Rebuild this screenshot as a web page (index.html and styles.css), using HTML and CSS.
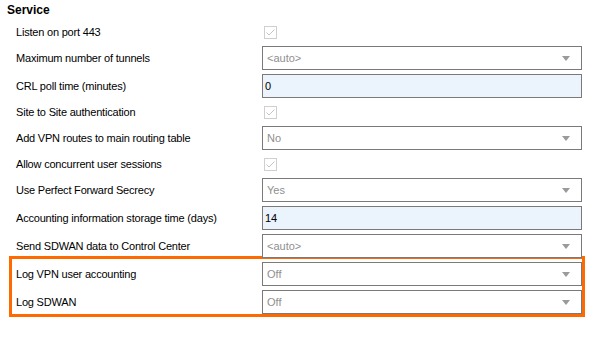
FILE: index.html
```html
<!DOCTYPE html>
<html lang="en">
<head>
    <meta charset="UTF-8">
    <title>Service</title>
    <link rel="stylesheet" href="styles.css">
</head>
<body>

<div class="panel">
    <div class="section-title">Service</div>

    <div class="rows">
        <div class="row check-row">
            <span class="label">Listen on port 443</span>
            <span class="check"><svg width="13" height="13" viewBox="0 0 13 13"><rect x="0.5" y="0.5" width="12" height="12" fill="#fff" stroke="#cfcfcf"/><path d="M2.5 6.5 L5 9 L10.5 3.5" fill="none" stroke="#c4c4c4" stroke-width="1"/></svg></span>
        </div>
        <div class="row">
            <span class="label">Maximum number of tunnels</span>
            <div class="select">&lt;auto&gt;<span class="arrow"></span></div>
        </div>
        <div class="row">
            <span class="label">CRL poll time (minutes)</span>
            <div class="input">0</div>
        </div>
        <div class="row check-row">
            <span class="label">Site to Site authentication</span>
            <span class="check"><svg width="13" height="13" viewBox="0 0 13 13"><rect x="0.5" y="0.5" width="12" height="12" fill="#fff" stroke="#cfcfcf"/><path d="M2.5 6.5 L5 9 L10.5 3.5" fill="none" stroke="#c4c4c4" stroke-width="1"/></svg></span>
        </div>
        <div class="row">
            <span class="label">Add VPN routes to main routing table</span>
            <div class="select">No<span class="arrow"></span></div>
        </div>
        <div class="row check-row">
            <span class="label">Allow concurrent user sessions</span>
            <span class="check"><svg width="13" height="13" viewBox="0 0 13 13"><rect x="0.5" y="0.5" width="12" height="12" fill="#fff" stroke="#cfcfcf"/><path d="M2.5 6.5 L5 9 L10.5 3.5" fill="none" stroke="#c4c4c4" stroke-width="1"/></svg></span>
        </div>
        <div class="row">
            <span class="label">Use Perfect Forward Secrecy</span>
            <div class="select">Yes<span class="arrow"></span></div>
        </div>
        <div class="row">
            <span class="label">Accounting information storage time (days)</span>
            <div class="input">14</div>
        </div>
        <div class="row">
            <span class="label">Send SDWAN data to Control Center</span>
            <div class="select">&lt;auto&gt;<span class="arrow"></span></div>
        </div>

        <div class="highlight">
            <div class="row">
                <span class="label">Log VPN user accounting</span>
                <div class="select">Off<span class="arrow"></span></div>
            </div>
            <div class="row">
                <span class="label">Log SDWAN</span>
                <div class="select">Off<span class="arrow"></span></div>
            </div>
        </div>
    </div>
</div>

</body>
</html>
```

FILE: styles.css
```css
body {
    margin: 0;
    padding: 0;
    background-color: #fff;
    font-family: 'Liberation Sans', Arial, sans-serif;
    font-size: 11px;
    color: #000;
}
.panel {
    padding: 3px 15px 0 12px;
}
.section-title {
    font-weight: bold;
    font-size: 12px;
    margin-left: -5px;
    height: 19px;
    line-height: 14px;
}
.rows {
    display: flex;
    flex-direction: column;
    gap: 4px;
}
.row {
    display: grid;
    grid-template-columns: 250px 1fr;
    align-items: center;
    height: 24px;
}
.check-row {
    height: 20px;
}
.label {
    padding-left: 4px;
    letter-spacing: -0.2px;
}
.check {
    display: flex;
    margin-left: 2px;
}
.select, .input {
    box-sizing: border-box;
    height: 24px;
    border: 1px solid #7a7a7a;
    padding: 0 4px;
    line-height: 22px;
    position: relative;
}
.select {
    color: #8f8f8f;
    background: #fff;
}
.input {
    background: #ebf3fd;
    padding-left: 2px;
}
.arrow {
    position: absolute;
    right: 11px;
    top: 9px;
    width: 0;
    height: 0;
    border-left: 4px solid transparent;
    border-right: 4px solid transparent;
    border-top: 5px solid #9a9a9a;
}
.highlight {
    display: flex;
    flex-direction: column;
    gap: 4px;
    margin: -6px -3px 0 -3px;
    padding-top: 3px;
    border: 3px solid #ff6a00;
}
```
